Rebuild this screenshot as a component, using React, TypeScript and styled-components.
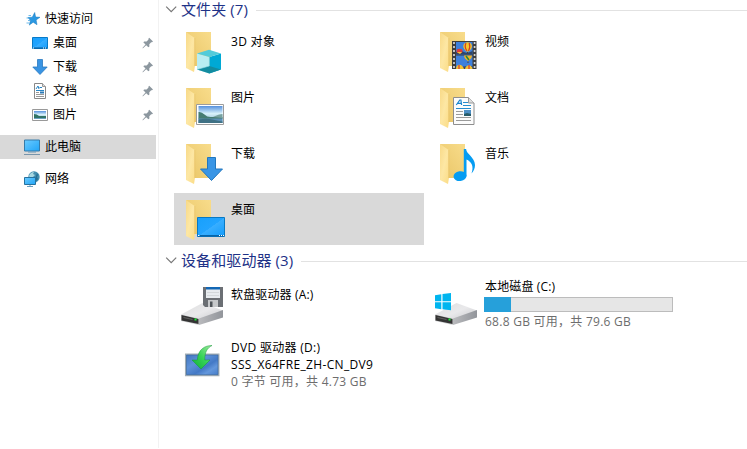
import React from 'react';
import styled, { createGlobalStyle } from 'styled-components';

const GlobalStyle = createGlobalStyle`
  * { box-sizing: border-box; }
  body {
    margin: 0;
    background: #fff;
    color: #000;
    font: 12px/17px "Open Sans", "Noto Sans CJK SC", sans-serif;
    overflow: hidden;
  }
  svg { display: block; flex: none; }
`;

const Window = styled.div`
  display: flex;
  width: 747px;
  height: 449px;
`;

const Sidebar = styled.nav`
  width: 159px;
  height: 448px;
  padding-top: 7px;
  border-right: 1px solid #f2f2f2;
`;

const NavRow = styled.div<{ $child?: boolean; $selected?: boolean; $gap?: number }>`
  display: flex;
  align-items: center;
  gap: 5px;
  width: 156px;
  height: 24px;
  margin-top: ${p => p.$gap ?? 0}px;
  padding: 0 2px 0 ${p => (p.$child ? 32 : 24)}px;
  background: ${p => (p.$selected ? '#d9d9d9' : 'transparent')};
`;

const NavLabel = styled.span`
  flex: 1;
  padding-bottom: 2px;
  white-space: nowrap;
`;

const Content = styled.main`
  flex: 1;
  min-width: 0;
  padding-left: 6px;
`;

const GroupHeader = styled.header<{ $gap?: number }>`
  display: flex;
  align-items: center;
  height: 20px;
  margin-top: ${p => p.$gap ?? 0}px;
  color: #1e3287;
`;

const GroupTitle = styled.h2<{ $width: number }>`
  flex: none;
  width: ${p => p.$width}px;
  margin: 0 0 0 4px;
  padding-bottom: 2px;
  font-size: 15px;
  font-weight: 400;
  line-height: 20px;
  letter-spacing: 0.1px;
  white-space: nowrap;
`;

const Rule = styled.div`
  flex: 1;
  height: 1px;
  margin-top: 1px;
  background: #e2e2e2;
`;

const FolderGrid = styled.section`
  display: grid;
  grid-template-columns: 250px 250px;
  grid-auto-rows: 52px;
  gap: 4px;
  padding: 5px 0 0 9px;
`;

const DriveGrid = styled(FolderGrid)`
  padding-top: 7px;
  row-gap: 9px;
`;

const Tile = styled.article<{ $selected?: boolean }>`
  display: flex;
  gap: 3px;
  padding: 2px 0 0 6px;
  background: ${p => (p.$selected ? '#d9d9d9' : 'transparent')};
`;

const TileText = styled.div<{ $lift?: number }>`
  margin-top: ${p => 6 - (p.$lift ?? 0)}px;
  white-space: nowrap;
`;

const Line = styled.div<{ $muted?: boolean; $spacing?: number }>`
  height: 17px;
  color: ${p => (p.$muted ? '#6d6d6d' : '#000')};
  letter-spacing: ${p => p.$spacing ?? 0.15}px;
`;

const Meter = styled.div`
  width: 189px;
  height: 15px;
  margin: 2px 0 1px -1px;
  border: 1px solid #bcbcbc;
  background: #e6e6e6;
`;

const MeterFill = styled.div`
  width: 27px;
  height: 15px;
  margin: -1px 0 0 -1px;
  background: #26a0da;
`;

const Chevron = () => (
  <svg width="12" height="20" viewBox="0 0 12 20">
    <path d="M1.2 6.700 6.2 11.700 11.2 6.700" fill="none" stroke="#777" strokeWidth="1.2" />
  </svg>
);

const Pin = () => (
  <svg width="12" height="12" viewBox="0 0 12 12">
    <path d="M7.2.8 11 4.600l-1 .7-.8-.1-1.900 2 .1 2.200-1 .9-2.200-2.100L1 11.200l-.5.1.1-.6 2.900-3.200L1.300 5.300l.9-.9 2.400.1 1.900-1.900-.1-.9z" fill="#8c979f" />
  </svg>
);

const Defs = () => (
  <svg width="0" height="0" style={{ position: 'absolute' }}>
    <defs>
      <linearGradient id="flap" x1="0" x2="1" y2="1"><stop stopColor="#f8d987" /><stop offset=".5" stopColor="#fde7a4" /><stop offset="1" stopColor="#fbdc86" /></linearGradient>
      <linearGradient id="back" x1="1" x2="0" y2="1"><stop stopColor="#f8dc8b" /><stop offset="1" stopColor="#e9c566" /></linearGradient>
      <linearGradient id="screen" x2="1" y2="1"><stop stopColor="#18a0fc" /><stop offset=".5" stopColor="#22a4ff" /><stop offset=".51" stopColor="#38aeff" /><stop offset="1" stopColor="#149cfb" /></linearGradient>
      <linearGradient id="pc" x2="1" y2="1"><stop stopColor="#6bcbff" /><stop offset="1" stopColor="#20a5f7" /></linearGradient>
      <linearGradient id="sky" x2="0" y2="1"><stop stopColor="#5590dd" /><stop offset=".45" stopColor="#d9f2fb" /><stop offset="1" stopColor="#76a6c5" /></linearGradient>
      <linearGradient id="top" x2="1" y2="1"><stop stopColor="#dedede" /><stop offset=".5" stopColor="#e9e9eb" /><stop offset="1" stopColor="#c6c7ca" /></linearGradient>
      <linearGradient id="side" x2="1"><stop stopColor="#b9babd" /><stop offset="1" stopColor="#92959b" /></linearGradient>
      <linearGradient id="dvd" x2="1" y2="1"><stop stopColor="#3f74bd" /><stop offset=".35" stopColor="#5f92d8" /><stop offset=".6" stopColor="#4379c6" /><stop offset=".75" stopColor="#6397dc" /><stop offset="1" stopColor="#427ac8" /></linearGradient>
      <linearGradient id="green" x1="1" x2="0" y2="1"><stop stopColor="#a3eaa0" /><stop offset=".5" stopColor="#35d356" /><stop offset="1" stopColor="#10ad34" /></linearGradient>
    </defs>
  </svg>
);

type Kind = 'cube' | 'video' | 'picture' | 'document' | 'download' | 'music' | 'desktop';

const overlays: Record<Kind, React.ReactNode> = {
  cube: (
    <g>
      <path d="M17 26.500 29.300 30v16.600L17 42.500z" fill="#b9edf2" />
      <path d="M29.300 30 41 26.500v16l-11.700 4.100z" fill="#00a9d5" />
      <path d="M17 26.500 29 22.800l12 3.700L29.300 30z" fill="#52cbda" />
      <path d="M17 42.500 29.300 39 41 42.500l-11.700 4.100z" fill="#138ca0" />
      <path d="M17 42.500 29.300 39v-9" fill="none" stroke="#95dce6" strokeWidth=".6" />
    </g>
  ),
  video: (
    <g>
      <path d="M18 14h24.500v28H18z" fill="#3d3d3d" />
      <path d="M22 15h16.500v12.500H22zM22 28.500h16.500V42H22z" fill="#3e80dc" />
      <path d="M22 25q5-2 8 0t8.500-1v3.500H22zM22 42v-1q6-2 16.500-2v3z" fill="#2f466b" />
      <path d="M20 15v27M40.600 15v27" stroke="#d6d6d6" strokeWidth="1.700" strokeDasharray="2 2" />
      <path d="M29.300 19.300c0-5.500 8.600-5.500 8.600 0 0 2.500-2 4-3 5.200h-2.500c-1-1.200-3.100-2.700-3.100-5.200z" fill="#f6c52c" />
      <path d="M32 16q-2 4 1 8M35.200 16q1.500 4-.7 8" stroke="#ce3e27" strokeWidth="1.200" fill="none" />
      <ellipse cx="25.500" cy="24" rx="3" ry="2.300" fill="#dd3b38" />
      <path d="M23 25h5l-2 2z" fill="#f8ca37" />
      <path d="M30 28.500h8c0 3-2 4-4 5.500-2-1-4-3-4-5.500z" fill="#f0b42a" />
      <path d="M32 29l3 4" stroke="#26863b" strokeWidth="1.500" />
      <path d="M22 42c0-5 6-6 8 0zM31 42c1-5 7-5 7.500 0z" fill="#f4c334" />
      <path d="M25 38v4M35 38v4" stroke="#da4935" strokeWidth="1.400" />
      <path d="M33.500 25v1.500M34 34.500v1.500" stroke="#553c30" />
    </g>
  ),
  picture: (
    <g>
      <path d="M16.500 21.500h27v20h-27z" fill="#fff" stroke="#9c9c9c" />
      <path d="M18.500 23h24v17h-24z" fill="url(#sky)" />
      <path d="M18.500 29q3-.5 6 2.500t7 2.500h11v2h-24z" fill="#467c72" />
      <path d="M33 34q6-3 9.500-3v4z" fill="#79a2a0" />
      <path d="M18.500 35.500h24V40h-24z" fill="#5c90b7" />
      <path d="M18.500 36.500q8-1.500 14 0t10 2V40h-24z" fill="#2b5d62" opacity=".6" />
    </g>
  ),
  document: (
    <g>
      <path d="M19.500 14.500h15l5.500 5.500v21.500H19.500z" fill="#fcfcfc" stroke="#8e8e8e" />
      <path d="M34.500 14.500V20H40" fill="#dedede" stroke="#999" />
      <path d="m22.300 22 3.500-5h1.100l.7 5M23.500 20.300h4" fill="none" stroke="#1684cf" strokeWidth="1.200" />
      <path d="M29 19.500h5M29 22.500h8M22 25.500h15" stroke="#268dcd" />
      <path d="M22 28.500h7M22 31.500h7M22 34.500h15M22 37.500h15" stroke="#9b9b9b" />
      <path d="M30 27h7v6h-7z" fill="#4e8fc5" />
      <path d="m30 31 3-1 4 1v2h-7z" fill="#275c69" />
    </g>
  ),
  download: <path d="M27.500 18.500h8v11.500h7L31.500 41.500 20.500 30h7z" fill="#3995e5" stroke="#2277be" />,
  music: (
    <g fill="#059cf2">
      <ellipse cx="26" cy="37.100" rx="6.500" ry="4.900" transform="rotate(-8 26 37.100)" />
      <path d="M29.800 10h2.300c.4 5.300 8.700 8.200 8.900 16 0 3.500-1.500 6.500-3.500 8.500 2.800-8-.5-12-5-14v17h-2.700z" />
    </g>
  ),
  desktop: (
    <g>
      <path d="M17.500 22.500h27v19h-27z" fill="url(#screen)" stroke="#0879c4" />
      <path d="M18 40h26v1.500H18z" fill="#0764a8" />
      <path d="M18 40.500h1.500M39 40.500h1M41 40.500h1M43 40.500h1" stroke="#fff" />
    </g>
  ),
};

const FolderIcon = ({ kind }: { kind: Kind }) => (
  <svg width="48" height="48" viewBox="0 0 48 48">
    <path d="M6 5h25v34H14z" fill="url(#back)" />
    <path d="m6 5 9 6.200v27.500l-1 6.300-8-4z" fill="url(#flap)" />
    <path d="M14.700 11v28" stroke="#e6bf64" strokeWidth=".7" />
    {overlays[kind]}
  </svg>
);

const DriveBody = () => (
  <g>
    <path d="M1 34.500 22.500 23 43 30.500 19 41z" fill="url(#top)" />
    <path d="M19 38.500 43 30v7.500L19 45z" fill="url(#side)" />
    <path d="m1 34.500 18 4V45L1 41z" fill="#d0d1d3" />
    <path d="m1.500 35 17 4v5L1.500 40.500z" fill="#343434" />
    <path d="m3.500 37.500 9 2" stroke="#626262" />
    <path d="M14.500 38.500h2v2h-2z" fill="#18ef35" />
  </g>
);

const FloppyDriveIcon = () => (
  <svg width="48" height="48" viewBox="0 0 48 48">
    <DriveBody />
    <path d="M23 7h20v20H25l-2-2z" fill="#6b6f74" />
    <path d="M26 7h14v11H26z" fill="#e7ebef" />
    <path d="M26 7h14v2.500H26z" fill="#1267b5" />
    <path d="M27 12.500h12M27 15.500h12" stroke="#d3d7da" />
    <path d="M28 20h10v7H28z" fill="#c6c8ca" />
    <path d="M30 21.500h2.500V27H30z" fill="#4f5459" />
  </svg>
);

const LocalDiskIcon = () => (
  <svg width="48" height="48" viewBox="0 0 48 48">
    <DriveBody />
    <path d="m1 15.200 6.300-1v7H1zm7.500-1.100L17 13v8.200H8.500zM1 22.300h6.300v7l-6.300-1zm7.500 0H17v7.900l-8.500-1z" fill="#00b5ef" />
  </svg>
);

const DvdIcon = () => (
  <svg width="48" height="48" viewBox="0 0 48 48">
    <path d="M5.700 13.200h33v21.300h-33z" fill="url(#dvd)" stroke="#a1adb5" strokeWidth="1.500" />
    <path d="M6.500 14h31.500v19.700H6.500z" fill="none" stroke="#35679f" strokeWidth=".6" />
    <path d="M32 4.500C25 4.500 18 8 17.300 19H12L21 28l9-9h-5.200C24.600 11.500 27 7 32 4.500z" fill="url(#green)" stroke="#159936" strokeWidth=".5" />
  </svg>
);

const StarIcon = () => (
  <svg width="16" height="16" viewBox="0 0 16 16">
    <path d="m10.700 1.500.9 4.500 4.400.3-3.900 2.600.9 4.800-3.800-2.500-3.900 2.900 1.200-4.600L4 6.500l4.300-.3z" fill="#2a98e2" stroke="#1577bd" strokeWidth=".5" />
    <path d="M4.500 4.500H7M2.500 7h3M4 9.500h2M2.500 12h3" stroke="#4aa9e6" strokeWidth=".8" />
  </svg>
);

const SmallDesktop = () => (
  <svg width="16" height="16" viewBox="0 0 16 16">
    <path d="M.5 2.500h15v11H.500z" fill="url(#screen)" stroke="#087ac8" />
    <path d="M1 13h14" stroke="#075b99" />
    <path d="M1 13h1M11 13h1M13 13h1" stroke="#fff" />
  </svg>
);

const SmallDownload = () => (
  <svg width="16" height="16" viewBox="0 0 16 16">
    <path d="M5.500.5h5V8h4.700L8 15.500.8 8h4.700z" fill="#3994e3" stroke="#2879c0" strokeWidth=".8" />
  </svg>
);

const SmallDocument = () => (
  <svg width="16" height="16" viewBox="0 0 16 16">
    <path d="M2.500.5h8L13.500 3.500v12h-11z" fill="#fff" stroke="#888" />
    <path d="M10.500.5v3h3" fill="#ddd" stroke="#999" />
    <path d="m4 6 2-3 1 3M7.500 4.500H10M4 7.500h8" fill="none" stroke="#2785c5" />
    <path d="M4 9.500h3M4 11.500h8M4 13.500h8" stroke="#999" />
    <path d="M8 8.500h4v2H8z" fill="#2c79b5" />
  </svg>
);

const SmallPicture = () => (
  <svg width="16" height="16" viewBox="0 0 16 16">
    <path d="M.5 2.500h15v11H.500z" fill="#fff" stroke="#999" />
    <path d="M2 4h12v8H2z" fill="url(#sky)" />
    <path d="M2 7q3 0 5 2h7v2H2z" fill="#317466" />
    <path d="M2 11.500h12" stroke="#6ba0c0" />
  </svg>
);

const PcIcon = () => (
  <svg width="16" height="16" viewBox="0 0 16 16">
    <path d="M.5 1h15v11H.500z" fill="url(#pc)" stroke="#367ba9" />
    <path d="M4 13h8" stroke="#6898b8" />
    <path d="M0 15.500h16" stroke="#7895ab" />
  </svg>
);

const NetworkIcon = () => (
  <svg width="16" height="16" viewBox="0 0 16 16">
    <circle cx="10" cy="6" r="5.700" fill="#438eae" />
    <path d="M5 5c1-3 3-4 5-4L9 3l2 1-2 2-3 1z" fill="#a9d8e1" />
    <path d="M13 2l1 2-1 2 1 2-1.500 2L11 8l1-3z" fill="#246f93" />
    <path d="M.5 6.500h11v7H.500z" fill="url(#pc)" stroke="#26729f" />
    <path d="M6 14v1M3 15.500h6" stroke="#6b9fbe" />
  </svg>
);

const pinned = [
  { label: '桌面', icon: <SmallDesktop /> },
  { label: '下载', icon: <SmallDownload /> },
  { label: '文档', icon: <SmallDocument /> },
  { label: '图片', icon: <SmallPicture /> },
];

const folders: { label: string; kind: Kind; selected?: boolean }[] = [
  { label: '3D 对象', kind: 'cube' },
  { label: '视频', kind: 'video' },
  { label: '图片', kind: 'picture' },
  { label: '文档', kind: 'document' },
  { label: '下载', kind: 'download' },
  { label: '音乐', kind: 'music' },
  { label: '桌面', kind: 'desktop', selected: true },
];

export default function App() {
  return (
    <Window>
      <GlobalStyle />
      <Defs />
      <Sidebar>
        <NavRow><StarIcon /><NavLabel>快速访问</NavLabel></NavRow>
        {pinned.map(item => (
          <NavRow key={item.label} $child>
            {item.icon}<NavLabel>{item.label}</NavLabel><Pin />
          </NavRow>
        ))}
        <NavRow $selected $gap={8}><PcIcon /><NavLabel>此电脑</NavLabel></NavRow>
        <NavRow $gap={8}><NetworkIcon /><NavLabel>网络</NavLabel></NavRow>
      </Sidebar>
      <Content>
        <GroupHeader>
          <Chevron /><GroupTitle $width={75}>文件夹 (7)</GroupTitle><Rule />
        </GroupHeader>
        <FolderGrid>
          {folders.map(folder => (
            <Tile key={folder.label} $selected={folder.selected}>
              <FolderIcon kind={folder.kind} />
              <TileText><Line $spacing={folder.kind === 'cube' ? 0.3 : 0}>{folder.label}</Line></TileText>
            </Tile>
          ))}
        </FolderGrid>
        <GroupHeader $gap={6}>
          <Chevron /><GroupTitle $width={120}>设备和驱动器 (3)</GroupTitle><Rule />
        </GroupHeader>
        <DriveGrid>
          <Tile>
            <FloppyDriveIcon />
            <TileText><Line>软盘驱动器 (A:)</Line></TileText>
          </Tile>
          <Tile>
            <LocalDiskIcon />
            <TileText $lift={8}>
              <Line>本地磁盘 (C:)</Line>
              <Meter><MeterFill /></Meter>
              <Line $muted $spacing={0.26}>68.8 GB 可用，共 79.6 GB</Line>
            </TileText>
          </Tile>
          <Tile>
            <DvdIcon />
            <TileText $lift={8}>
              <Line $spacing={0.3}>DVD 驱动器 (D:)</Line>
              <Line $spacing={0.35}>SSS_X64FRE_ZH-CN_DV9</Line>
              <Line $muted $spacing={0.25}>0 字节 可用，共 4.73 GB</Line>
            </TileText>
          </Tile>
        </DriveGrid>
      </Content>
    </Window>
  );
}
